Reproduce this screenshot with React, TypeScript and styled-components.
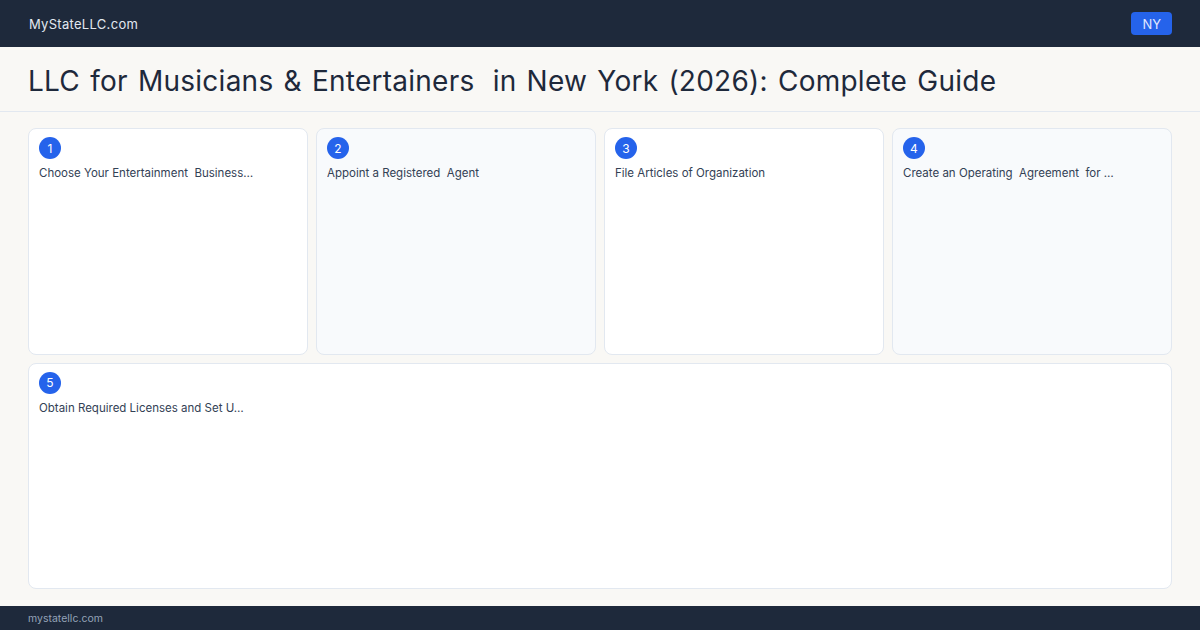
import * as React from 'react';
import styled, { createGlobalStyle } from 'styled-components';

const GlobalStyle = createGlobalStyle`
  html, body {
    margin: 0;
    padding: 0;
    height: 100%;
  }
  body {
    font-family: Inter, "Noto Sans", sans-serif;
    background: #f9f8f5;
    color: #1e293b;
  }
  #root {
    height: 100%;
  }
`;

const Page = styled.div`
  width: 1200px;
  height: 630px;
  display: flex;
  flex-direction: column;
  overflow: hidden;
`;

const TopBar = styled.header`
  height: 47px;
  flex: none;
  background: #1e293b;
  display: flex;
  align-items: center;
  justify-content: space-between;
  padding: 0 28px 0 29px;
`;

const Brand = styled.div`
  color: #e2e8f0;
  font-size: 13px;
  letter-spacing: 0.3px;
`;

const StateBadge = styled.div`
  background: #2563eb;
  color: #e0e7ff;
  font-size: 13px;
  height: 23px;
  padding: 0 11px;
  border-radius: 4px;
  display: flex;
  align-items: center;
`;

const TitleBar = styled.div`
  height: 64px;
  flex: none;
  border-bottom: 1px solid #e2e8f0;
  display: flex;
  align-items: center;
  padding: 0 28px;
`;

const Title = styled.h1`
  margin: 3px 0 0;
  font-size: 28px;
  font-weight: 400;
  color: #1e293b;
  letter-spacing: 0.25px;
  word-spacing: 2px;
  white-space: pre;
`;

const Gap = styled.span`
  display: inline-block;
  width: 8px;
`;

const Main = styled.main`
  flex: 1;
  min-height: 0;
  padding: 16px 28px 17px;
  display: grid;
  grid-template-columns: repeat(4, 1fr);
  grid-template-rows: 1fr 1fr;
  gap: 8px;
`;

const Card = styled.div<{ $tinted?: boolean; $wide?: boolean }>`
  background: ${(p) => (p.$tinted ? '#f8fafc' : '#ffffff')};
  border: 1px solid #e2e8f0;
  border-radius: 8px;
  padding: 8px 10px;
  min-width: 0;
  grid-column: ${(p) => (p.$wide ? '1 / -1' : 'auto')};
`;

const StepNum = styled.div`
  width: 22px;
  height: 22px;
  border-radius: 50%;
  background: #2563eb;
  color: #ffffff;
  font-size: 12px;
  display: flex;
  align-items: center;
  justify-content: center;
`;

const StepText = styled.div`
  margin-top: 7px;
  font-size: 11.5px;
  color: #334155;
  white-space: pre;
  overflow: hidden;
`;

const Footer = styled.footer`
  height: 24px;
  flex: none;
  background: #1e293b;
  display: flex;
  align-items: center;
  padding: 0 28px;
  color: #94a3b8;
  font-size: 10.5px;
`;

const steps = [
  'Choose Your Entertainment  Business…',
  'Appoint a Registered  Agent',
  'File Articles of Organization',
  'Create an Operating  Agreement  for …',
  'Obtain Required Licenses and Set U…',
];

export default function App() {
  return (
    <>
      <GlobalStyle />
      <Page>
        <TopBar>
          <Brand>MyStateLLC.com</Brand>
          <StateBadge>NY</StateBadge>
        </TopBar>
        <TitleBar>
          <Title>
            LLC for Musicians &amp; Entertainers
            <Gap /> in New York (2026): Complete Guide
          </Title>
        </TitleBar>
        <Main>
          {steps.map((s, i) => (
            <Card key={i} $tinted={i % 2 === 1} $wide={i === 4}>
              <StepNum>{i + 1}</StepNum>
              <StepText>{s}</StepText>
            </Card>
          ))}
        </Main>
        <Footer>mystatellc.com</Footer>
      </Page>
    </>
  );
}
